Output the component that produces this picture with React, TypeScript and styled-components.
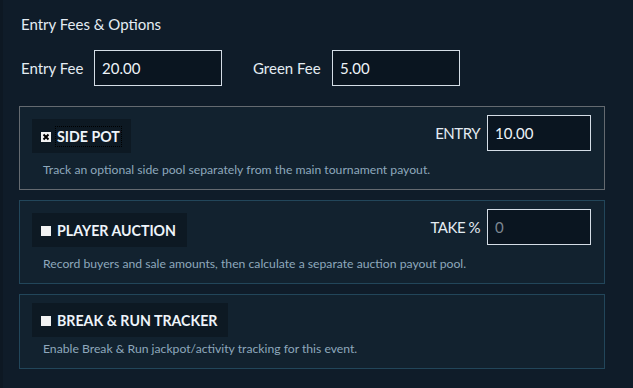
import styled, { createGlobalStyle, css } from "styled-components";

const GlobalStyle = createGlobalStyle`
  html, body {
    margin: 0;
    padding: 0;
    background: #0f1c29;
  }
  body {
    font-family: Lato, "Noto Sans", sans-serif;
    color: #e4ecf3;
  }
`;

type Option = {
  title: string;
  checked: boolean;
  focused?: boolean;
  description: string;
  fieldLabel?: string;
  fieldValue?: string;
  placeholder?: string;
};

const options: Option[] = [
  {
    title: "SIDE POT",
    checked: true,
    focused: true,
    description:
      "Track an optional side pool separately from the main tournament payout.",
    fieldLabel: "ENTRY",
    fieldValue: "10.00",
  },
  {
    title: "PLAYER AUCTION",
    checked: false,
    description:
      "Record buyers and sale amounts, then calculate a separate auction payout pool.",
    fieldLabel: "TAKE %",
    placeholder: "0",
  },
  {
    title: "BREAK & RUN TRACKER",
    checked: false,
    description: "Enable Break & Run jackpot/activity tracking for this event.",
  },
];

function CheckBox({ checked }: { checked: boolean }) {
  return (
    <Box>
      {checked && (
        <svg width="10" height="10" viewBox="0 0 10 10">
          <path d="M2.5 2.5 L7.5 7.5 M7.5 2.5 L2.5 7.5" stroke="#000" strokeWidth="2" />
        </svg>
      )}
    </Box>
  );
}

function OptionPanel({ option }: { option: Option }) {
  const hasField = !!option.fieldLabel;
  return (
    <Panel $active={!!option.focused}>
      <PanelRow>
        <Toggle $hasField={hasField}>
          <CheckBox checked={option.checked} />
          <ToggleText $focused={!!option.focused}>{option.title}</ToggleText>
        </Toggle>
        {hasField && (
          <FieldGroup>
            <FieldLabel>{option.fieldLabel}</FieldLabel>
            <Input
              $width={104}
              defaultValue={option.fieldValue}
              placeholder={option.placeholder}
            />
          </FieldGroup>
        )}
      </PanelRow>
      <Description $hasField={hasField}>{option.description}</Description>
    </Panel>
  );
}

export default function App() {
  return (
    <>
      <GlobalStyle />
      <Page>
        <Title>Entry Fees &amp; Options</Title>
        <FeeRow>
          <FeeLabel>Entry Fee</FeeLabel>
          <Input $width={128} defaultValue="20.00" />
          <FeeLabel $gap>Green Fee</FeeLabel>
          <Input $width={128} defaultValue="5.00" />
        </FeeRow>
        <PanelList>
          {options.map((o) => (
            <OptionPanel key={o.title} option={o} />
          ))}
        </PanelList>
      </Page>
    </>
  );
}

const Page = styled.div`
  width: 633px;
  height: 388px;
  box-sizing: border-box;
  border-left: 3px solid #0d1823;
  padding: 14px 0 0 18px;
  overflow: hidden;
`;

const Title = styled.div`
  font-size: 15px;
  line-height: 20px;
  color: #e4ecf3;
`;

const FeeRow = styled.div`
  display: flex;
  align-items: center;
  margin-top: 16px;
`;

const FeeLabel = styled.span<{ $gap?: boolean }>`
  width: 60px;
  font-size: 15px;
  color: #e4ecf3;
  margin-right: 13px;
  white-space: nowrap;
  ${(p) =>
    p.$gap &&
    css`
      width: 66px;
      margin-left: 31px;
    `}
`;

const Input = styled.input<{ $width: number }>`
  width: ${(p) => p.$width}px;
  height: 36px;
  box-sizing: border-box;
  border: 1px solid #d4dde6;
  background: #0a1520;
  color: #eef3f8;
  font-family: inherit;
  font-size: 15px;
  padding: 0 7px;
  outline: none;
  &::placeholder {
    color: #7d8792;
  }
`;

const PanelList = styled.div`
  display: flex;
  flex-direction: column;
  gap: 10px;
  margin-top: 20px;
  margin-left: -2px;
  width: 586px;
`;

const Panel = styled.div<{ $active: boolean }>`
  border: 1px solid ${(p) => (p.$active ? "#646a70" : "#22465a")};
  background: #12222f;
  padding: 8px 13px 10px 12px;
`;

const PanelRow = styled.div`
  display: flex;
  align-items: flex-start;
  justify-content: space-between;
`;

const Toggle = styled.div<{ $hasField: boolean }>`
  display: flex;
  align-items: center;
  gap: 4px;
  height: 34px;
  padding: 0 9px;
  background: #0d1923;
  margin-top: ${(p) => (p.$hasField ? 4 : 0)}px;
`;

const Box = styled.span`
  width: 10px;
  height: 10px;
  background: #f2f2f2;
  display: inline-flex;
  margin-top: 1px;
`;

const ToggleText = styled.span<{ $focused: boolean }>`
  font-size: 14.2px;
  font-weight: 700;
  color: #eef4fa;
  padding: 1px 1px;
  border: 1px dotted ${(p) => (p.$focused ? "#000" : "transparent")};
`;

const FieldGroup = styled.div`
  display: flex;
  align-items: center;
  gap: 7px;
`;

const FieldLabel = styled.span`
  font-size: 15px;
  letter-spacing: -0.5px;
  color: #e4ecf3;
`;

const Description = styled.div<{ $hasField: boolean }>`
  font-size: 12.2px;
  line-height: 18px;
  color: #8ea8bc;
  margin-top: ${(p) => (p.$hasField ? 8 : 3)}px;
  padding-left: 11px;
`;
